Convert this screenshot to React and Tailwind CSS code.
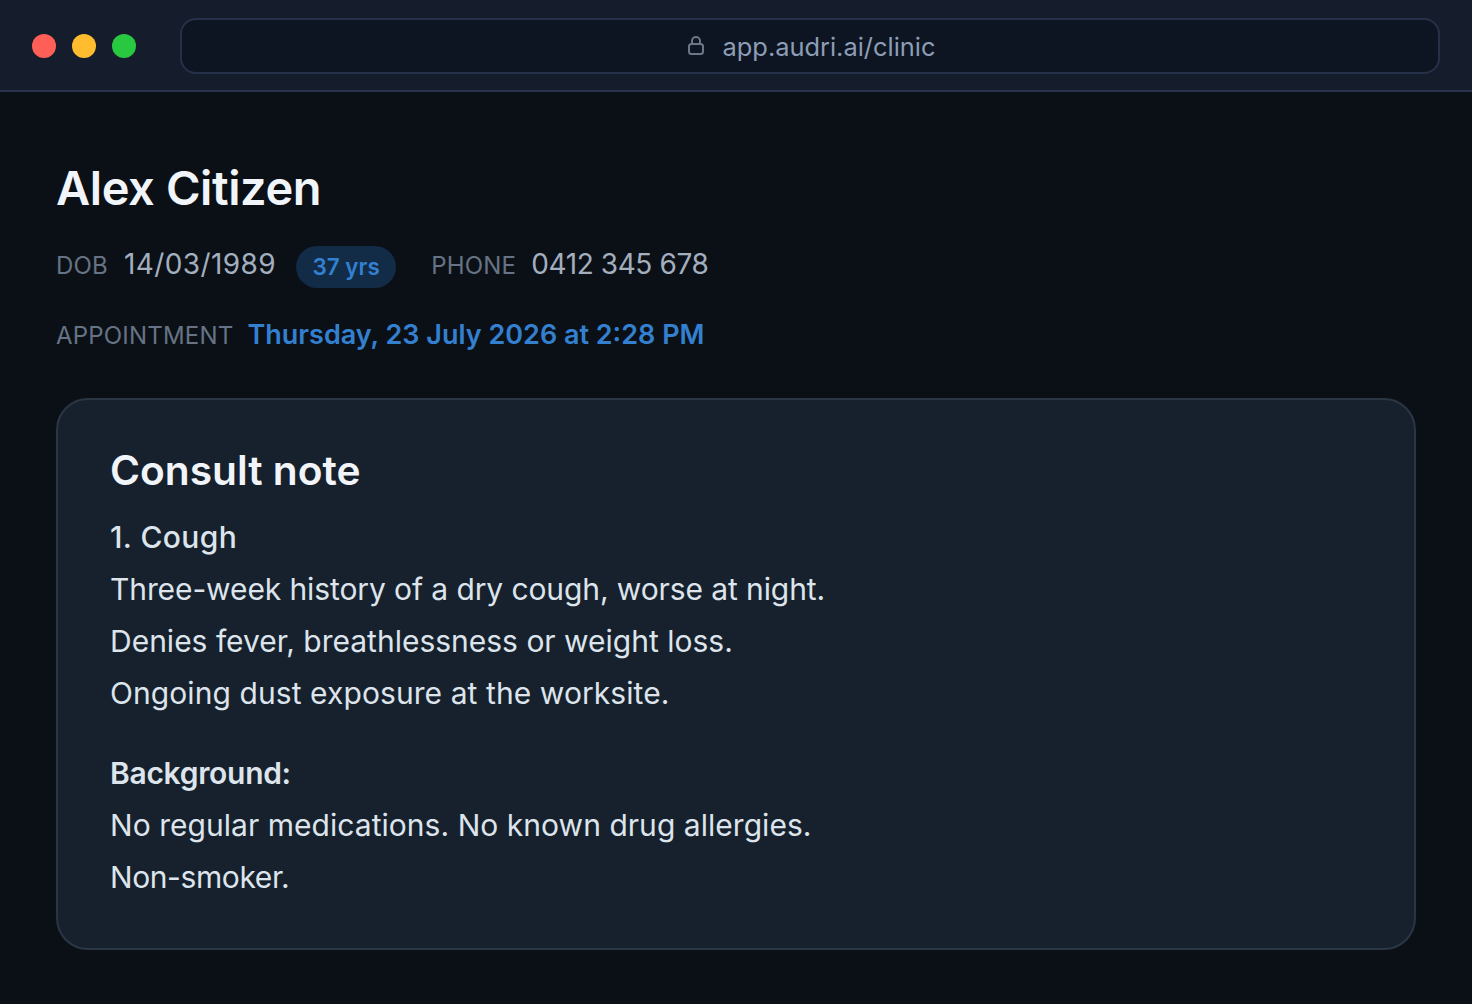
import React from 'react';

const App = () => {
  return (
    <div className="min-h-screen bg-[#0b1017] font-['Inter',sans-serif]">
      <div className="h-[92px] pt-[2px] flex items-center pl-8 pr-8 gap-11 bg-[#151d2c] border-b-2 border-[#283349]">
        <div className="flex items-center gap-4">
          <div className="w-6 h-6 rounded-full bg-[#ff5f57]" />
          <div className="w-6 h-6 rounded-full bg-[#febc2e]" />
          <div className="w-6 h-6 rounded-full bg-[#28c840]" />
        </div>
        <div className="flex-1 h-14 flex items-center justify-center gap-[18px] rounded-2xl border-2 border-[#263149] bg-[#0d1522]">
          <svg className="ml-[2px]" width="18" height="20" viewBox="0 0 18 20" fill="none" stroke="#6b7788" strokeWidth="2">
            <rect x="2" y="8" width="14" height="10" rx="2.5" />
            <path d="M5 8V5a4 4 0 0 1 8 0v3" />
          </svg>
          <span className="mt-[2px] text-[25.4px] text-[#8d9db5]">app.audri.ai/clinic</span>
        </div>
      </div>

      <div className="pt-[63px] px-14">
        <h1 className="text-[47px] leading-[66px] font-semibold text-[#f1f5f9] tracking-[-0.4px]">Alex Citizen</h1>

        <div className="mt-[23px] flex items-center h-[42px]">
          <span className="mt-[2px] text-[24px] text-[#667384] tracking-[0.2px] mr-4">DOB</span>
          <span className="text-[28px] text-[#a3afbf] tracking-[0.4px] mr-5 mb-[2px]">14/03/1989</span>
          <span className="h-[42px] mt-1 px-[16.5px] flex items-center rounded-full bg-[#122b47] text-[22.4px] font-semibold text-[#3380d0]">37 yrs</span>
          <span className="mt-[2px] ml-[35px] text-[24px] text-[#667384] tracking-[0.2px] mr-[15px]">PHONE</span>
          <span className="text-[28px] text-[#a3afbf] tracking-[-0.4px] mb-[2px]">0412 345 678</span>
        </div>

        <div className="mt-7 flex items-center h-[42px]">
          <span className="mt-[2px] text-[24px] text-[#667384] tracking-[0.2px] mr-[14px]">APPOINTMENT</span>
          <span className="text-[27px] font-semibold text-[#3380d0]">Thursday, 23 July 2026 at 2:28 PM</span>
        </div>

        <div className="mt-[42px] h-[552px] rounded-[32px] border-2 border-[#2a3644] bg-[#16212d] pt-[42px] px-[52px]">
          <h2 className="text-[40.7px] leading-[58px] font-semibold text-[#f1f5f9]">Consult note</h2>
          <div className="mt-[11px] text-[30px] leading-[52px] text-[#dde4ec]">
            <p className="font-medium tracking-[0.4px]">1. Cough</p>
            <p className="tracking-[-0.1px]">Three-week history of a dry cough, worse at night.</p>
            <p>Denies fever, breathlessness or weight loss.</p>
            <p className="tracking-[0.08px]">Ongoing dust exposure at the worksite.</p>
            <p className="mt-7 font-semibold tracking-[-0.3px]">Background:</p>
            <p className="tracking-[0.04px]">No regular medications. No known drug allergies.</p>
            <p className="tracking-[-0.4px]">Non-smoker.</p>
          </div>
        </div>
      </div>
    </div>
  );
};

export default App;
